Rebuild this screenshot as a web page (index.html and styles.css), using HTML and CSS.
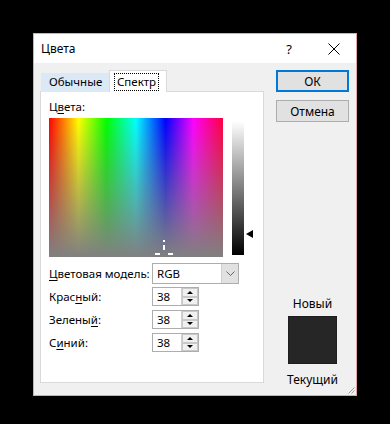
FILE: index.html
```html
<!DOCTYPE html>
<html lang="ru">
<head>
  <meta charset="UTF-8" />
  <title>Цвета</title>
  <link rel="stylesheet" href="styles.css">
</head>
<body>
  <div class="dialog">
    <div class="titlebar">
      <span class="title">Цвета</span>
      <span class="help">?</span>
      <span class="close">
        <svg width="12" height="12" viewBox="0 0 12 12"><path d="M0.5 0.5 L11.5 11.5 M11.5 0.5 L0.5 11.5" stroke="#000" stroke-width="1"/></svg>
      </span>
    </div>

    <div class="content">
      <div class="main">
        <div class="tabs">
          <div class="tab">Обычные</div>
          <div class="tab active"><span class="focus">Спектр</span></div>
        </div>

        <div class="panel">
          <div class="caption">Ц<u>в</u>ета:</div>
          <div class="picker">
            <div class="spectrum">
              <svg class="cross" width="20" height="18" viewBox="0 0 20 18">
                <rect x="8" y="0" width="2" height="2" fill="#fff"/>
                <rect x="8" y="5" width="2" height="5" fill="#fff"/>
                <rect x="0" y="13" width="5" height="2" fill="#fff"/>
                <rect x="13" y="13" width="5" height="2" fill="#fff"/>
              </svg>
            </div>
            <div class="lum"></div>
            <div class="lum-arrow"></div>
          </div>

          <div class="row">
            <span class="lbl"><u>Ц</u>ветовая модель:</span>
            <div class="select">
              <span class="val">RGB</span>
              <span class="drop">
                <svg width="9" height="5" viewBox="0 0 9 5"><path d="M0.5 0.5 L4.5 4.5 L8.5 0.5" fill="none" stroke="#666" stroke-width="1"/></svg>
              </span>
            </div>
          </div>
          <div class="row spin-row">
            <span class="lbl">Крас<u>н</u>ый:</span>
            <div class="spin"><span class="val">38</span><span class="arrows"><i class="up"></i><i class="down"></i></span></div>
          </div>
          <div class="row spin-row">
            <span class="lbl">Зелены<u>й</u>:</span>
            <div class="spin"><span class="val">38</span><span class="arrows"><i class="up"></i><i class="down"></i></span></div>
          </div>
          <div class="row spin-row">
            <span class="lbl">С<u>и</u>ний:</span>
            <div class="spin"><span class="val">38</span><span class="arrows"><i class="up"></i><i class="down"></i></span></div>
          </div>
        </div>
      </div>

      <div class="side">
        <button class="btn default">ОК</button>
        <button class="btn">Отмена</button>
        <div class="preview-label">Новый</div>
        <div class="swatch"></div>
        <div class="preview-label current">Текущий</div>
      </div>
    </div>

    <svg class="grip" width="8" height="8" viewBox="0 0 8 8">
      <path d="M7.5 1.5 L1.5 7.5 M7.5 4.5 L4.5 7.5" stroke="#a0a0a0" stroke-width="1"/>
    </svg>
  </div>
</body>
</html>
```

FILE: styles.css
```css
body {
  margin: 0;
  background: #000;
  font-family: "Segoe UI", "Noto Sans", sans-serif;
  font-size: 11.5px;
  color: #000;
}
u {
  text-decoration-thickness: 1px;
  text-underline-offset: 2px;
}
.dialog {
  position: relative;
  margin: 33px 0 0 33px;
  width: 322px;
  border: 1px solid #e2a3ab;
  background: #f0f0f0;
}
.titlebar {
  display: flex;
  align-items: center;
  height: 29px;
  background: #fff;
  padding-left: 7px;
}
.title {
  flex: 1;
  font-size: 12px;
}
.help {
  font-size: 13px;
  margin-right: 36px;
}
.close {
  display: flex;
  margin-right: 16px;
}
.content {
  display: flex;
  padding: 7px 0 7px 6px;
}
.main {
  width: 224px;
}
.tabs {
  display: flex;
  align-items: flex-end;
  height: 22px;
  margin-bottom: -1px;
  position: relative;
  z-index: 1;
}
.tab {
  height: 19px;
  line-height: 18px;
  padding: 0 6px 0 8px;
  margin-left: 1px;
  background: #dbe8f5;
  box-sizing: border-box;
  width: 68px;
  white-space: nowrap;
}
.tab.active {
  height: 22px;
  width: 58px;
  margin-left: 0;
  background: #fff;
  border: 1px solid #d9d9d9;
  border-bottom: none;
  padding: 2px 3px 0 4px;
}
.focus {
  display: inline-block;
  border: 1px dotted #000;
  line-height: 16px;
  padding: 0 2px;
}
.panel {
  height: 292px;
  box-sizing: border-box;
  background: #fff;
  border: 1px solid #d9d9d9;
  padding: 7px 0 0 8px;
}
.caption {
  line-height: 16px;
}
.picker {
  display: flex;
  align-items: flex-start;
  margin-top: 3px;
  height: 139px;
}
.spectrum {
  position: relative;
  width: 174px;
  height: 139px;
  overflow: hidden;
  background:
    linear-gradient(to bottom, rgba(128,128,128,0), #808080),
    linear-gradient(to right, #ff0000, #ffff00 17%, #00ff00 33%, #00ffff 50%, #0000ff 67%, #ff00ff 83%, #ff0040);
}
.cross {
  position: absolute;
  left: 106px;
  top: 122px;
}
.lum {
  width: 12px;
  height: 134px;
  margin: 3px 0 0 9px;
  background: linear-gradient(to bottom, #fff, #000);
}
.lum-arrow {
  width: 0;
  height: 0;
  margin: 112px 0 0 2px;
  border-right: 7px solid #000;
  border-top: 4px solid transparent;
  border-bottom: 4px solid transparent;
}
.row {
  display: flex;
  align-items: center;
  margin-top: 6px;
}
.spin-row {
  margin-top: 3px;
}
.spin-row + .spin-row {
  margin-top: 4px;
}
.lbl {
  width: 103px;
  white-space: nowrap;
}
.select {
  display: flex;
  width: 87px;
  height: 21px;
  box-sizing: border-box;
  border: 1px solid #adadad;
  background: #fff;
}
.select .val,
.spin .val {
  flex: 1;
  padding-left: 4px;
  line-height: 19px;
}
.drop {
  width: 16px;
  background: #e1e1e1;
  border-left: 1px solid #cfcfcf;
  display: flex;
  align-items: center;
  justify-content: center;
}
.spin {
  display: flex;
  width: 47px;
  height: 19px;
  box-sizing: border-box;
  border: 1px solid #adadad;
  background: #fff;
}
.spin .val {
  line-height: 17px;
}
.arrows {
  width: 16px;
  display: flex;
  flex-direction: column;
  border-left: 1px solid #d0d0d0;
}
.arrows i {
  flex: 1;
  display: flex;
  align-items: center;
  justify-content: center;
  background: #f0f0f0;
  border: 1px solid #c8c8c8;
}
.arrows i::after {
  content: "";
  border-left: 3px solid transparent;
  border-right: 3px solid transparent;
}
.arrows .up::after {
  border-bottom: 3px solid #000;
}
.arrows .down::after {
  border-top: 3px solid #000;
}
.side {
  width: 73px;
  margin-left: 12px;
  display: flex;
  flex-direction: column;
  align-items: center;
}
.btn {
  width: 73px;
  height: 22px;
  font-family: inherit;
  font-size: 12px;
  color: #000;
  background: #e1e1e1;
  border: 1px solid #adadad;
  padding: 0;
  margin: 0 0 8px;
}
.btn.default {
  border: 2px solid #0078d7;
}
.preview-label {
  font-size: 12px;
  line-height: 16px;
  margin-top: 166px;
}
.swatch {
  width: 49px;
  height: 48px;
  margin-top: 4px;
  background: #262626;
  border: 1px solid #1e1e1e;
  box-sizing: border-box;
}
.preview-label.current {
  margin-top: 8px;
}
.grip {
  position: absolute;
  right: 1px;
  bottom: 1px;
}
```
